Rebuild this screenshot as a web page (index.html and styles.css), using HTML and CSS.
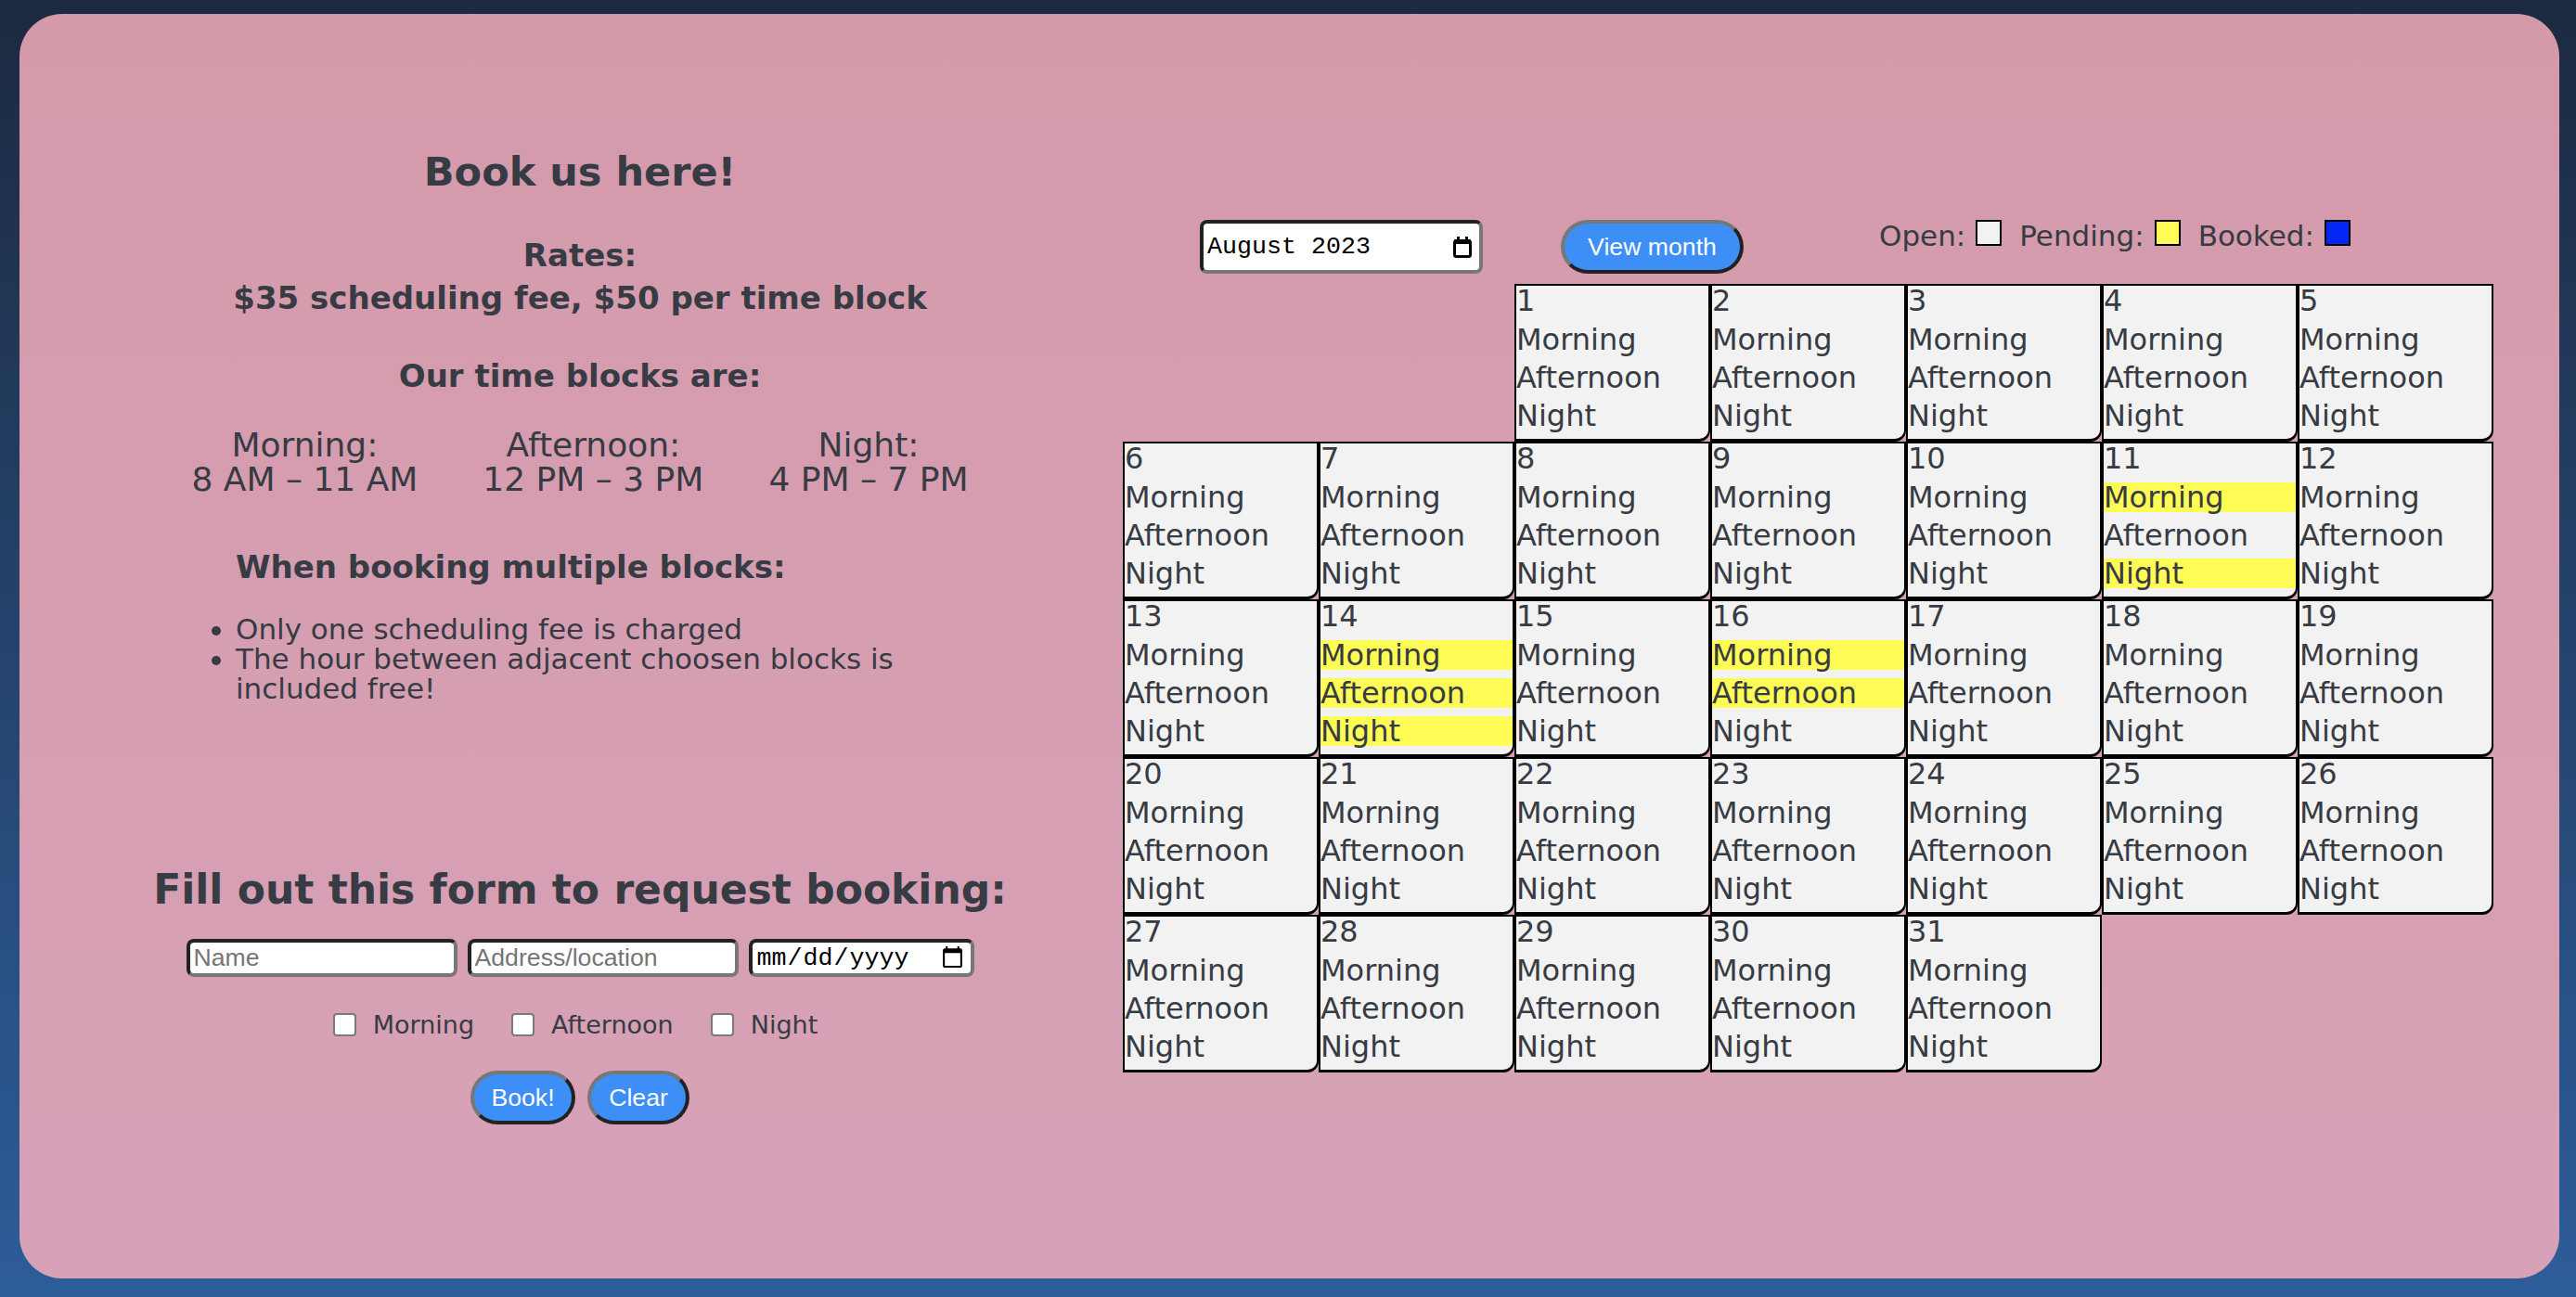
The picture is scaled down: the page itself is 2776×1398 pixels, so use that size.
FILE: index.html
```html
<!DOCTYPE html>
<html lang="en">
<head>
<meta charset="utf-8">
<title>Book us here!</title>
<link rel="stylesheet" href="styles.css">
</head>
<body>
<main class="card">
  <section class="info">
    <h1 class="title">Book us here!</h1>
    <div class="rates">
      <div>Rates:</div>
      <div>$35 scheduling fee, $50 per time block</div>
    </div>
    <h2 class="subhead">Our time blocks are:</h2>
    <div class="blocks">
      <div class="block"><div>Morning:</div><div>8 AM – 11 AM</div></div>
      <div class="block"><div>Afternoon:</div><div>12 PM – 3 PM</div></div>
      <div class="block"><div>Night:</div><div>4 PM – 7 PM</div></div>
    </div>
    <div class="multi">
      <h3 class="multi-head">When booking multiple blocks:</h3>
      <ul class="multi-list">
        <li>Only one scheduling fee is charged</li>
        <li>The hour between adjacent choosen blocks is included free!</li>
      </ul>
    </div>
    <form class="booking">
      <h2 class="form-title">Fill out this form to request booking:</h2>
      <div class="fields">
        <input class="field text-field" type="text" placeholder="Name">
        <input class="field text-field" type="text" placeholder="Address/location">
        <input class="field date-field" type="date">
      </div>
      <div class="checks">
        <label class="check"><input type="checkbox" class="box">Morning</label>
        <label class="check"><input type="checkbox" class="box">Afternoon</label>
        <label class="check"><input type="checkbox" class="box">Night</label>
      </div>
      <div class="actions">
        <button type="button" class="btn btn-book">Book!</button>
        <button type="button" class="btn btn-clear">Clear</button>
      </div>
    </form>
  </section>

  <section class="cal-panel">
    <div class="controls">
      <div class="month-input">
        <input class="month-text" type="text" value="August 2023" readonly aria-label="Month">
        <svg class="cal-icon" width="20" height="23" viewBox="0 0 20 23" aria-hidden="true">
          <rect x="1.5" y="4.5" width="17" height="17" rx="2" fill="none" stroke="#000" stroke-width="3"/>
          <rect x="1" y="3" width="18" height="5" rx="1" fill="#000"/>
          <rect x="4" y="0" width="3" height="4" fill="#000"/>
          <rect x="13" y="0" width="3" height="4" fill="#000"/>
        </svg>
      </div>
      <button type="button" class="btn view-btn">View month</button>
      <div class="legend">
        <span class="legend-label">Open:</span><span class="swatch open"></span>
        <span class="legend-label">Pending:</span><span class="swatch pending-sw"></span>
        <span class="legend-label">Booked:</span><span class="swatch booked"></span>
      </div>
    </div>
    <div class="calendar">
      <div class="day first"><div class="num">1</div><div class="slot">Morning</div><div class="slot">Afternoon</div><div class="slot">Night</div></div>
      <div class="day"><div class="num">2</div><div class="slot">Morning</div><div class="slot">Afternoon</div><div class="slot">Night</div></div>
      <div class="day"><div class="num">3</div><div class="slot">Morning</div><div class="slot">Afternoon</div><div class="slot">Night</div></div>
      <div class="day"><div class="num">4</div><div class="slot">Morning</div><div class="slot">Afternoon</div><div class="slot">Night</div></div>
      <div class="day"><div class="num">5</div><div class="slot">Morning</div><div class="slot">Afternoon</div><div class="slot">Night</div></div>
      <div class="day"><div class="num">6</div><div class="slot">Morning</div><div class="slot">Afternoon</div><div class="slot">Night</div></div>
      <div class="day"><div class="num">7</div><div class="slot">Morning</div><div class="slot">Afternoon</div><div class="slot">Night</div></div>
      <div class="day"><div class="num">8</div><div class="slot">Morning</div><div class="slot">Afternoon</div><div class="slot">Night</div></div>
      <div class="day"><div class="num">9</div><div class="slot">Morning</div><div class="slot">Afternoon</div><div class="slot">Night</div></div>
      <div class="day"><div class="num">10</div><div class="slot">Morning</div><div class="slot">Afternoon</div><div class="slot">Night</div></div>
      <div class="day"><div class="num">11</div><div class="slot pending">Morning</div><div class="slot">Afternoon</div><div class="slot pending">Night</div></div>
      <div class="day"><div class="num">12</div><div class="slot">Morning</div><div class="slot">Afternoon</div><div class="slot">Night</div></div>
      <div class="day"><div class="num">13</div><div class="slot">Morning</div><div class="slot">Afternoon</div><div class="slot">Night</div></div>
      <div class="day"><div class="num">14</div><div class="slot pending">Morning</div><div class="slot pending">Afternoon</div><div class="slot pending">Night</div></div>
      <div class="day"><div class="num">15</div><div class="slot">Morning</div><div class="slot">Afternoon</div><div class="slot">Night</div></div>
      <div class="day"><div class="num">16</div><div class="slot pending">Morning</div><div class="slot pending">Afternoon</div><div class="slot">Night</div></div>
      <div class="day"><div class="num">17</div><div class="slot">Morning</div><div class="slot">Afternoon</div><div class="slot">Night</div></div>
      <div class="day"><div class="num">18</div><div class="slot">Morning</div><div class="slot">Afternoon</div><div class="slot">Night</div></div>
      <div class="day"><div class="num">19</div><div class="slot">Morning</div><div class="slot">Afternoon</div><div class="slot">Night</div></div>
      <div class="day"><div class="num">20</div><div class="slot">Morning</div><div class="slot">Afternoon</div><div class="slot">Night</div></div>
      <div class="day"><div class="num">21</div><div class="slot">Morning</div><div class="slot">Afternoon</div><div class="slot">Night</div></div>
      <div class="day"><div class="num">22</div><div class="slot">Morning</div><div class="slot">Afternoon</div><div class="slot">Night</div></div>
      <div class="day"><div class="num">23</div><div class="slot">Morning</div><div class="slot">Afternoon</div><div class="slot">Night</div></div>
      <div class="day"><div class="num">24</div><div class="slot">Morning</div><div class="slot">Afternoon</div><div class="slot">Night</div></div>
      <div class="day"><div class="num">25</div><div class="slot">Morning</div><div class="slot">Afternoon</div><div class="slot">Night</div></div>
      <div class="day"><div class="num">26</div><div class="slot">Morning</div><div class="slot">Afternoon</div><div class="slot">Night</div></div>
      <div class="day"><div class="num">27</div><div class="slot">Morning</div><div class="slot">Afternoon</div><div class="slot">Night</div></div>
      <div class="day"><div class="num">28</div><div class="slot">Morning</div><div class="slot">Afternoon</div><div class="slot">Night</div></div>
      <div class="day"><div class="num">29</div><div class="slot">Morning</div><div class="slot">Afternoon</div><div class="slot">Night</div></div>
      <div class="day"><div class="num">30</div><div class="slot">Morning</div><div class="slot">Afternoon</div><div class="slot">Night</div></div>
      <div class="day"><div class="num">31</div><div class="slot">Morning</div><div class="slot">Afternoon</div><div class="slot">Night</div></div>
    </div>
  </section>
</main>
</body>
</html>
```
FILE: styles.css
```css
html, body {
  margin: 0;
  height: 100%;
}

body {
  box-sizing: border-box;
  height: 1398px;
  padding: 15px 18px 20px 21px;
  background: linear-gradient(180deg, #1c2a40 0%, #2d5d9a 100%);
  font-family: "DejaVu Sans", sans-serif;
  color: #373b43;
}

.card {
  display: flex;
  box-sizing: border-box;
  height: 1363px;
  padding-left: 19px;
  border-radius: 46px;
  background: linear-gradient(180deg, #d49aaa 0%, #d7a2b8 100%);
}

/* ---------- left column ---------- */
.info {
  width: 1170px;
  flex: none;
  padding-top: 145px;
  text-align: center;
}

.title {
  margin: 0;
  font-size: 43px;
  line-height: 50px;
  font-weight: bold;
}

.rates {
  margin-top: 42px;
  font-size: 34px;
  line-height: 46px;
  font-weight: bold;
}

.subhead {
  margin: 38px 0 0;
  font-size: 34px;
  line-height: 46px;
  font-weight: bold;
}

.blocks {
  display: flex;
  justify-content: center;
  gap: 70px;
  margin-top: 33px;
  font-size: 36px;
  line-height: 37px;
}

.block {
  text-align: center;
}

.multi {
  width: 902px;
  margin: 53px auto 0;
  text-align: left;
}

.multi-head {
  margin: 0;
  padding-left: 80px;
  font-size: 34px;
  line-height: 46px;
  font-weight: bold;
}

.multi-list {
  margin: 28px 0 0;
  padding-left: 80px;
  font-size: 31px;
  line-height: 32px;
}

.booking {
  margin: 0;
}

.form-title {
  margin: 175px 0 0;
  font-size: 44px;
  line-height: 51px;
  font-weight: bold;
}

.fields {
  display: flex;
  justify-content: center;
  gap: 11px;
  margin-top: 28px;
}

.field {
  box-sizing: border-box;
  height: 41px;
  margin: 0;
  padding: 0 4px;
  border: 4px solid;
  border-color: #222 #777 #777 #222;
  border-radius: 8px;
  background: #fff;
  color: #000;
  font-size: 26.67px;
}

.text-field {
  width: 292px;
  font-family: "Liberation Sans", Arial, sans-serif;
}

.text-field::placeholder {
  color: #757575;
}

.date-field {
  width: 243px;
  font-family: "Liberation Mono", monospace;
}

.checks {
  display: flex;
  justify-content: center;
  align-items: center;
  gap: 40px;
  height: 36px;
  margin-top: 33px;
  padding-right: 10px;
  font-size: 27px;
}

.check {
  display: flex;
  align-items: center;
}

.box {
  appearance: none;
  -webkit-appearance: none;
  box-sizing: border-box;
  width: 25px;
  height: 25px;
  margin: 0 18px 0 0;
  border: 2px solid #7a7a7a;
  border-radius: 4px;
  background: #fff;
}

.actions {
  display: flex;
  justify-content: center;
  gap: 13px;
  margin-top: 32px;
}

.btn {
  box-sizing: border-box;
  height: 58px;
  margin: 0;
  padding: 0;
  border: 4px solid;
  border-color: #777 #222 #222 #777;
  border-radius: 999px;
  background: #3d8ef6;
  color: #fff;
  font-family: "Liberation Sans", Arial, sans-serif;
  font-size: 26.67px;
}

.btn-book {
  width: 113px;
}

.btn-clear {
  width: 110px;
}

/* ---------- right column ---------- */
.cal-panel {
  width: 1477px;
  flex: none;
  padding-top: 222px;
}

.controls {
  display: flex;
  align-items: flex-start;
  height: 58px;
}

.month-input {
  display: flex;
  align-items: center;
  box-sizing: border-box;
  width: 305px;
  height: 58px;
  margin-left: 83px;
  padding: 0 8px 0 4px;
  border: 4px solid;
  border-color: #222 #777 #777 #222;
  border-radius: 8px;
  background: #fff;
}

.month-text {
  flex: 1;
  min-width: 0;
  margin: 0;
  padding: 0;
  border: 0;
  outline: none;
  background: transparent;
  color: #000;
  font-family: "Liberation Mono", monospace;
  font-size: 26.67px;
}

.cal-icon {
  flex: none;
  display: block;
}

.view-btn {
  width: 197px;
  margin-left: 84px;
}

.legend {
  display: flex;
  align-items: baseline;
  margin-left: 146px;
  font-size: 31px;
  line-height: 32px;
}

.legend-label {
  margin-right: 11px;
}

.swatch {
  display: inline-block;
  box-sizing: border-box;
  width: 28px;
  height: 28px;
  margin-right: 19px;
  border: 2px solid #000;
}

.open {
  background: #f2f2f2;
}

.pending-sw {
  background: #fffc55;
}

.booked {
  background: #0526f5;
}

.calendar {
  display: grid;
  grid-template-columns: repeat(7, 211px);
  grid-auto-rows: 170px;
  margin-top: 11px;
}

.day {
  box-sizing: border-box;
  border: 2px solid #000;
  border-bottom-width: 3px;
  border-bottom-right-radius: 12px;
  background: #f2f2f2;
  font-size: 32px;
  line-height: 32px;
  white-space: nowrap;
  overflow: hidden;
}

.first {
  grid-column-start: 3;
}

.num {
  height: 33px;
  line-height: 33px;
}

.slot {
  height: 32px;
  margin-top: 9px;
}

.pending {
  background: #fffc55;
}
```
